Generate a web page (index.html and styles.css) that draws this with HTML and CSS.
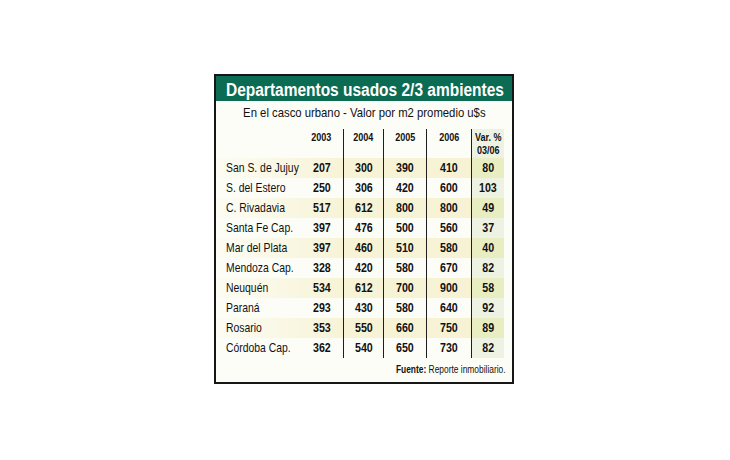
FILE: index.html
```html
<!DOCTYPE html>
<html lang="es">
<head>
<meta charset="utf-8">
<link rel="stylesheet" href="styles.css">
</head>
<body>
<div class="card">
  <div class="title"><span class="n l">Departamentos usados 2/3 ambientes</span></div>
  <div class="subtitle"><span class="n">En el casco urbano - Valor por m2 promedio u$s</span></div>
  <div class="table">
    <div class="row head">
      <div class="lab"></div>
      <div class="c"><span class="n">2003</span></div>
      <div class="c ln"><span class="n">2004</span></div>
      <div class="c ln"><span class="n">2005</span></div>
      <div class="c ln"><span class="n">2006</span></div>
      <div class="c ln var"><span class="n">Var. %<br>03/06</span></div>
    </div>
    <div class="row alt"><div class="lab"><span class="n l">San S. de Jujuy</span></div><div class="c"><span class="n">207</span></div><div class="c ln"><span class="n">300</span></div><div class="c ln"><span class="n">390</span></div><div class="c ln"><span class="n">410</span></div><div class="c ln var"><span class="n">80</span></div></div>
    <div class="row"><div class="lab"><span class="n l">S. del Estero</span></div><div class="c"><span class="n">250</span></div><div class="c ln"><span class="n">306</span></div><div class="c ln"><span class="n">420</span></div><div class="c ln"><span class="n">600</span></div><div class="c ln var"><span class="n">103</span></div></div>
    <div class="row alt"><div class="lab"><span class="n l">C. Rivadavia</span></div><div class="c"><span class="n">517</span></div><div class="c ln"><span class="n">612</span></div><div class="c ln"><span class="n">800</span></div><div class="c ln"><span class="n">800</span></div><div class="c ln var"><span class="n">49</span></div></div>
    <div class="row"><div class="lab"><span class="n l">Santa Fe Cap.</span></div><div class="c"><span class="n">397</span></div><div class="c ln"><span class="n">476</span></div><div class="c ln"><span class="n">500</span></div><div class="c ln"><span class="n">560</span></div><div class="c ln var"><span class="n">37</span></div></div>
    <div class="row alt"><div class="lab"><span class="n l">Mar del Plata</span></div><div class="c"><span class="n">397</span></div><div class="c ln"><span class="n">460</span></div><div class="c ln"><span class="n">510</span></div><div class="c ln"><span class="n">580</span></div><div class="c ln var"><span class="n">40</span></div></div>
    <div class="row"><div class="lab"><span class="n l">Mendoza Cap.</span></div><div class="c"><span class="n">328</span></div><div class="c ln"><span class="n">420</span></div><div class="c ln"><span class="n">580</span></div><div class="c ln"><span class="n">670</span></div><div class="c ln var"><span class="n">82</span></div></div>
    <div class="row alt"><div class="lab"><span class="n l">Neuquén</span></div><div class="c"><span class="n">534</span></div><div class="c ln"><span class="n">612</span></div><div class="c ln"><span class="n">700</span></div><div class="c ln"><span class="n">900</span></div><div class="c ln var"><span class="n">58</span></div></div>
    <div class="row"><div class="lab"><span class="n l">Paraná</span></div><div class="c"><span class="n">293</span></div><div class="c ln"><span class="n">430</span></div><div class="c ln"><span class="n">580</span></div><div class="c ln"><span class="n">640</span></div><div class="c ln var"><span class="n">92</span></div></div>
    <div class="row alt"><div class="lab"><span class="n l">Rosario</span></div><div class="c"><span class="n">353</span></div><div class="c ln"><span class="n">550</span></div><div class="c ln"><span class="n">660</span></div><div class="c ln"><span class="n">750</span></div><div class="c ln var"><span class="n">89</span></div></div>
    <div class="row"><div class="lab"><span class="n l">Córdoba Cap.</span></div><div class="c"><span class="n">362</span></div><div class="c ln"><span class="n">540</span></div><div class="c ln"><span class="n">650</span></div><div class="c ln"><span class="n">730</span></div><div class="c ln var"><span class="n">82</span></div></div>
  </div>
  <div class="source"><span class="n r"><b>Fuente:</b> Reporte inmobiliario.</span></div>
</div>
</body>
</html>
```
FILE: styles.css
```css
html, body {
  margin: 0;
  padding: 0;
  background: #ffffff;
}
body {
  padding: 74px 0 0 214px;
  font-family: "Liberation Sans", Arial, sans-serif;
  color: #111;
}
.card {
  box-sizing: border-box;
  width: 300px;
  height: 310px;
  border: 2px solid #161616;
  background: #fdfdf8;
  display: flex;
  flex-direction: column;
}
/* narrow (condensed) rendering of text, like Helvetica Narrow */
.n {
  display: inline-block;
  white-space: nowrap;
  transform: scaleX(0.82);
  transform-origin: center;
}
.n.l {
  transform-origin: left center;
}
.n.r {
  transform-origin: right center;
}
.title {
  height: 25px;
  box-sizing: border-box;
  padding: 3px 0 0 10px;
  line-height: 22px;
  background: #0b6b53;
  color: #ffffff;
  font-weight: bold;
  font-size: 18px;
  white-space: nowrap;
}
.title .n {
  transform: scaleX(0.86);
}
.subtitle {
  height: 28px;
  line-height: 24px;
  text-align: center;
  font-size: 13px;
  color: #111;
  white-space: nowrap;
}
.subtitle .n {
  transform: scaleX(0.87);
}
.table {
  display: flex;
  flex-direction: column;
}
.row {
  display: grid;
  grid-template-columns: 84px 43px 40px 43px 45px 33px;
  width: 288px;
  height: 20px;
  align-items: stretch;
}
.row.head {
  height: 29px;
}
.row.alt {
  background: linear-gradient(to right, #fcfcf3 0%, #f7f3d6 45%, #f6f2d2 100%);
}
.lab {
  padding-left: 10px;
  font-size: 13px;
  line-height: 20px;
  white-space: nowrap;
}
.lab .n {
  transform: scaleX(0.8);
}
.c {
  text-align: center;
  font-weight: bold;
  font-size: 13px;
  line-height: 20px;
}
.ln {
  border-left: 1px solid #1e1e1e;
}
.var {
  background: #eef2e2;
}
.row.alt .var {
  background: #e8edc2;
}
.head .c {
  font-size: 11px;
  line-height: 13px;
  padding-top: 2px;
}
.source {
  flex: 1;
  text-align: right;
  padding-right: 6px;
  font-size: 10px;
  line-height: 24px;
}
.source .n {
  transform: scaleX(0.84);
}
```
